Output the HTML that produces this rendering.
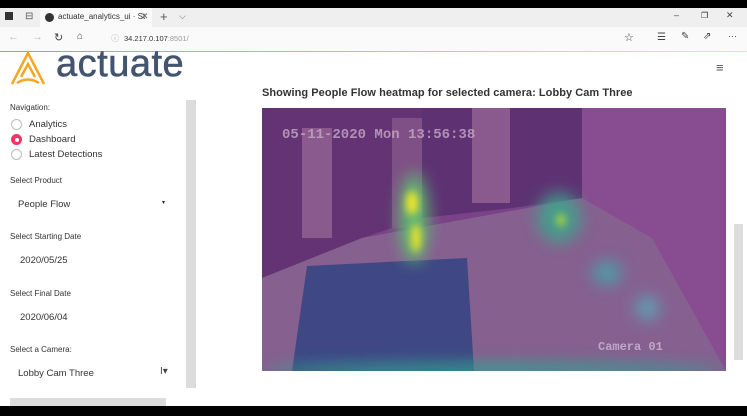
<!DOCTYPE html>
<html><head><style>
*{margin:0;padding:0;box-sizing:border-box}
body{width:747px;height:416px;overflow:hidden;background:#fff;font-family:"Liberation Sans",sans-serif;position:relative;color:#262730}
.a{position:absolute}
.lbl{font-size:8px;color:#333}
.val{font-size:9.5px;color:#333}
.rad{width:11px;height:11px;border-radius:50%;border:1px solid #bbb;background:#fff}
</style></head><body>
<div class="a" style="left:0;top:0;width:747px;height:8px;background:#000"></div>
<div class="a" style="left:0;top:8px;width:747px;height:19px;background:#efefef"></div>
<div class="a" style="left:40px;top:8px;width:112px;height:19px;background:#fafafa"></div>
<div class="a" style="left:5px;top:12px;width:8px;height:8px;background:#333"></div>
<div class="a" style="left:25px;top:11px;font-size:10px;color:#555">⊟</div>
<div class="a" style="left:45px;top:13px;width:9px;height:9px;border-radius:50%;background:#333"></div>
<div class="a" style="left:58px;top:12px;font-size:8px;color:#333">actuate_analytics_ui · St</div>
<div class="a" style="left:141px;top:11px;font-size:9px;color:#666">✕</div>
<div class="a" style="left:160px;top:9px;font-size:13px;color:#555">+</div>
<div class="a" style="left:179px;top:11px;font-size:9px;color:#666">⌵</div>
<div class="a" style="left:674px;top:10px;font-size:9px;color:#444">–</div>
<div class="a" style="left:701px;top:11px;font-size:8px;color:#222">❐</div>
<div class="a" style="left:726px;top:10px;font-size:9px;color:#444">✕</div>
<div class="a" style="left:0;top:27px;width:747px;height:24px;background:#fafafa"></div>
<div class="a" style="left:8px;top:31px;font-size:11px;color:#bbb">←</div>
<div class="a" style="left:32px;top:31px;font-size:11px;color:#bbb">→</div>
<div class="a" style="left:54px;top:31px;font-size:11px;color:#444">↻</div>
<div class="a" style="left:77px;top:31px;font-size:10px;color:#444">⌂</div>
<div class="a" style="left:111px;top:33px;font-size:8px;color:#aaa">ⓘ</div>
<div class="a" style="left:124px;top:34px;font-size:7.5px;color:#333">34.217.0.107<span style="color:#999">:8501/</span></div>
<div class="a" style="left:624px;top:31px;font-size:11px;color:#333">☆</div>
<div class="a" style="left:657px;top:32px;font-size:10px;color:#444">☰</div>
<div class="a" style="left:681px;top:31px;font-size:10px;color:#444">✎</div>
<div class="a" style="left:703px;top:31px;font-size:10px;color:#444">⇗</div>
<div class="a" style="left:728px;top:31px;font-size:9px;color:#444">···</div>
<div class="a" style="left:0;top:51px;width:747px;height:1px;background:linear-gradient(90deg,#f07a8a,#f5b07a 50%,#ffe0a0)"></div>
<div class="a" style="left:0;top:406px;width:747px;height:10px;background:#000"></div>
<svg class="a" style="left:8px;top:50px" width="42" height="38" viewBox="0 0 42 38"><g fill="none" stroke="#f5a623" stroke-width="2.5"><path d="M4 34 L20 3 L36 34"/><path d="M9 33 Q20 26 31 33"/><path d="M13 27 L20 14 L27 27"/></g></svg>
<div class="a" style="left:56px;top:43px;font-size:38px;color:#44546f;letter-spacing:0.5px;-webkit-text-stroke:0.6px #44546f">actuate</div>
<div class="a" style="left:716px;top:60px;font-size:13px;color:#555">≡</div>
<div class="a lbl" style="left:10px;top:103px">Navigation:</div>
<div class="a rad" style="left:11px;top:119px"></div><div class="a val" style="left:29px;top:119px">Analytics</div>
<div class="a rad" style="left:11px;top:134px;background:#f63366;border-color:#f63366"><div style="width:4px;height:4px;background:#fff;border-radius:50%;margin:3px"></div></div><div class="a val" style="left:29px;top:134px">Dashboard</div>
<div class="a rad" style="left:11px;top:149px"></div><div class="a val" style="left:29px;top:149px">Latest Detections</div>
<div class="a lbl" style="left:10px;top:176px">Select Product</div>
<div class="a val" style="left:18px;top:199px">People Flow</div>
<div class="a" style="left:162px;top:199px;font-size:6px">▾</div>
<div class="a lbl" style="left:10px;top:232px">Select Starting Date</div>
<div class="a val" style="left:20px;top:255px">2020/05/25</div>
<div class="a lbl" style="left:10px;top:289px">Select Final Date</div>
<div class="a val" style="left:20px;top:312px">2020/06/04</div>
<div class="a lbl" style="left:10px;top:345px">Select a Camera:</div>
<div class="a val" style="left:18px;top:368px">Lobby Cam Three</div>
<div class="a" style="left:160px;top:366px;font-size:10px;color:#444">I▾</div>
<div class="a" style="left:186px;top:100px;width:10px;height:288px;background:#dcdcdc"></div>
<div class="a" style="left:10px;top:398px;width:156px;height:8px;background:#dcdcdc"></div>
<div class="a" style="left:262px;top:87px;font-size:11px;color:#333;font-weight:bold;letter-spacing:0.05px">Showing People Flow heatmap for selected camera: Lobby Cam Three</div>
<div class="a" style="left:734px;top:224px;width:9px;height:136px;background:#dcdcdc"></div>
<svg class="a" style="left:262px;top:108px" width="464" height="263" viewBox="0 0 464 263">
<defs><filter id="b"><feGaussianBlur stdDeviation="8"/></filter><filter id="b2"><feGaussianBlur stdDeviation="4"/></filter></defs>
<rect width="464" height="263" fill="#7a4388"/>
<rect x="318" y="0" width="146" height="263" fill="#884c90"/>
<polygon points="0,0 160,0 160,110 100,130 0,170" fill="#633373"/>
<polygon points="160,0 320,0 320,90 250,100 160,110" fill="#5e3272"/>
<rect x="40" y="20" width="30" height="110" fill="#8a5a8e"/>
<rect x="130" y="10" width="30" height="110" fill="#7f5086"/>
<rect x="210" y="0" width="38" height="95" fill="#8a5a8e"/>
<polygon points="0,170 100,130 320,90 390,130 464,263 0,263" fill="#86608f"/>
<polygon points="45,158 205,150 212,263 30,263" fill="#3f4784"/>
<g filter="url(#b)" opacity=".9">
<ellipse cx="152" cy="110" rx="14" ry="45" fill="#5ac76f"/>
<ellipse cx="297" cy="110" rx="22" ry="25" fill="#3fa38c"/>
<ellipse cx="345" cy="165" rx="15" ry="12" fill="#4aa2a8"/>
<ellipse cx="385" cy="200" rx="12" ry="12" fill="#5aa8b8"/>
<ellipse cx="232" cy="263" rx="230" ry="8" fill="#30a090"/>
</g>
<g filter="url(#b2)">
<ellipse cx="150" cy="95" rx="6" ry="12" fill="#f2e62a"/>
<ellipse cx="154" cy="130" rx="5" ry="14" fill="#e7e229"/>
<ellipse cx="299" cy="112" rx="4" ry="6" fill="#b8de30"/>
</g>
<text x="20" y="30" font-family="Liberation Mono" font-size="14" font-weight="bold" fill="#c8a8c8" opacity=".8">05-11-2020 Mon 13:56:38</text>
<text x="336" y="242" font-family="Liberation Mono" font-size="12" font-weight="bold" fill="#d0b8d8" opacity=".8">Camera 01</text>
</svg>
</body></html>
